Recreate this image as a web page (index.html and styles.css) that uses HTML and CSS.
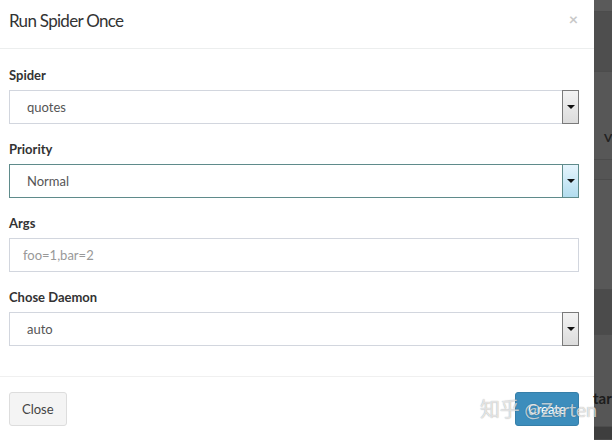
FILE: index.html
```html
<!DOCTYPE html>
<html>
    <head>
        <meta charset="UTF-8">
        <title>Run Spider Once</title>
        <link rel="stylesheet" href="styles.css">
    </head>
    <body>
        <div id="page">
            <div class="modal">
                <div class="modal-header">
                    <h4 class="title">Run Spider Once</h4>
                    <span class="close">&times;</span>
                </div>
                <div class="modal-body">
                    <div class="group">
                        <label>Spider</label>
                        <div class="select">
                            <span class="value">quotes</span>
                            <span class="arrow"><i></i></span>
                        </div>
                    </div>
                    <div class="group">
                        <label>Priority</label>
                        <div class="select focus">
                            <span class="value">Normal</span>
                            <span class="arrow"><i></i></span>
                        </div>
                    </div>
                    <div class="group">
                        <label>Args</label>
                        <div class="input"><span class="placeholder">foo=1,bar=2</span></div>
                    </div>
                    <div class="group">
                        <label>Chose Daemon</label>
                        <div class="select">
                            <span class="value">auto</span>
                            <span class="arrow"><i></i></span>
                        </div>
                    </div>
                </div>
                <div class="modal-footer">
                    <div class="btn btn-default">Close</div>
                    <div class="btn btn-primary">Create</div>
                </div>
            </div>
            <div class="backdrop">
                <div class="band b1"></div>
                <div class="band b2"></div>
                <div class="band b3"><span class="glyph">V</span></div>
                <div class="band b4"></div>
                <div class="band b5"></div>
                <div class="band b6"></div>
                <div class="band b7"><span class="word">tar</span></div>
                <div class="band b8"></div>
            </div>
            <div class="watermark">知乎 @Zarten</div>
        </div>
    </body>
</html>
```

FILE: styles.css
```css
*{ margin:0; padding:0; box-sizing: border-box;}
body{
    font-family: Lato, "Noto Sans", "Noto Sans CJK SC", sans-serif;
    color: #333;
    background: #fff;
}
#page{
    position: relative;
    display: flex;
    width: 612px;
    height: 440px;
    overflow: hidden;
}
.modal{
    width: 594px;
    background: #fff;
    display: flex;
    flex-direction: column;
}
.modal-header{
    display: flex;
    justify-content: space-between;
    align-items: flex-start;
    height: 49px;
    padding: 9px 16px 0 9px;
    border-bottom: 1px solid #eceeee;
}
.modal-header .title{
    font-size: 17px;
    font-weight: normal;
    line-height: 24px;
    letter-spacing: -0.7px;
    color: #333;
}
.modal-header .close{
    font-size: 16px;
    font-weight: bold;
    line-height: 16px;
    margin-top: 2px;
    color: #c8c8c8;
}
.modal-body{
    padding: 17px 15px 30px 9px;
}
.group{
    margin-bottom: 16px;
}
.group:last-child{
    margin-bottom: 0;
}
.group label{
    display: block;
    font-size: 13px;
    font-weight: bold;
    line-height: 18px;
    margin-bottom: 6px;
    color: #333;
}
.select{
    display: flex;
    height: 34px;
    font-size: 13px;
    color: #555;
}
.select .value{
    flex: 1;
    display: flex;
    align-items: center;
    padding-left: 17px;
    border: 1px solid #d2d6de;
    border-right: none;
}
.select .arrow{
    width: 17px;
    display: flex;
    align-items: center;
    justify-content: center;
    border: 1px solid #7a7a7a;
    background: linear-gradient(#f3f3f3, #dcdcdc);
}
.select .arrow i{
    width: 0;
    height: 0;
    border-left: 4px solid transparent;
    border-right: 4px solid transparent;
    border-top: 4px solid #111;
}
.select.focus .value{
    border-color: #5f8b8b;
    border-width: 1px 0 1px 1px;
}
.select.focus .arrow{
    border-color: #5f8b8b;
    background: linear-gradient(#e6f5fd, #b3ddef);
}
.input{
    display: flex;
    align-items: center;
    height: 34px;
    padding-left: 13px;
    border: 1px solid #d2d6de;
    font-size: 13px;
}
.input .placeholder{
    color: #999;
}
.modal-footer{
    display: flex;
    justify-content: space-between;
    padding: 15px 15px 0 9px;
    border-top: 1px solid #f0f0f0;
    height: 64px;
}
.btn{
    height: 34px;
    display: flex;
    align-items: center;
    padding: 0 12px;
    font-size: 13px;
    border-radius: 3px;
    border: 1px solid #ddd;
}
.btn-default{
    background: #f4f4f4;
    color: #444;
    width: 58px;
}
.btn-primary{
    background: #3c8dbc;
    border-color: #367fa9;
    color: #fff;
    width: 64px;
}
.backdrop{
    flex: 1;
    display: flex;
    flex-direction: column;
    background: #555;
}
.band{
    position: relative;
    border-bottom: 1px solid #4c4c4c;
}
.b1{ height: 12px; background: #5a5a5a;}
.b2{ height: 60px; background: #4e4e4e;}
.b3{ height: 88px; background: #575757;}
.b4{ height: 20px; background: #555;}
.b5{ height: 110px; background: #585858;}
.b6{ height: 45px; background: #4b4b4b;}
.b7{ height: 92px; background: #565656;}
.b8{ flex: 1; background: #3e3e3e;}
.glyph{
    position: absolute;
    left: 10px;
    top: 58px;
    font-size: 12px;
    font-weight: bold;
    color: #222;
}
.word{
    position: absolute;
    left: -1px;
    top: 54px;
    font-size: 15px;
    font-weight: bold;
    color: #1c1c1c;
}
.watermark{
    position: absolute;
    left: 480px;
    top: 396px;
    font-size: 20px;
    line-height: 26px;
    letter-spacing: -0.3px;
    color: rgba(255,255,255,.7);
    text-shadow: 0 0 1px rgba(0,0,0,.4);
    white-space: nowrap;
}
```
